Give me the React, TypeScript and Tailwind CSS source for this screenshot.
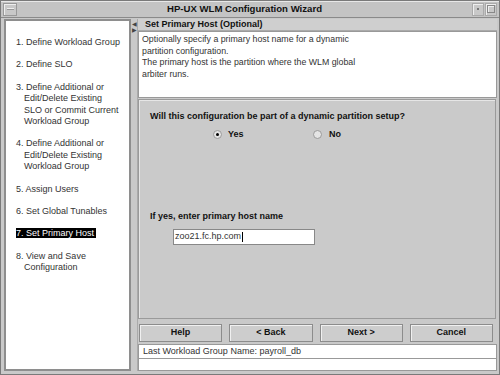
const steps: { lines: string[]; active?: boolean }[] = [
  { lines: ["1. Define Workload Group"] },
  { lines: ["2. Define SLO"] },
  { lines: ["3. Define Additional or", "Edit/Delete Existing", "SLO or Commit Current", "Workload Group"] },
  { lines: ["4. Define Additional or", "Edit/Delete Existing", "Workload Group"] },
  { lines: ["5. Assign Users"] },
  { lines: ["6. Set Global Tunables"] },
  { lines: ["7. Set Primary Host"], active: true },
  { lines: ["8. View and Save", "Configuration"] },
];

function Radio({ checked }: { checked?: boolean }) {
  return (
    <span className="flex h-[9px] w-[9px] items-center justify-center rounded-full border border-[#9a9a9a] bg-[#e4e4e4]">
      {checked && <span className="h-[3px] w-[3px] rounded-full bg-black" />}
    </span>
  );
}

function Button({ label }: { label: string }) {
  return (
    <div className="flex h-[18px] flex-1 items-center justify-center border border-[#8c8c8c] bg-[#cdcdcd] text-[9px] font-bold text-[#111] shadow-[inset_1px_1px_0_#f0f0f0]">
      {label}
    </div>
  );
}

export default function App() {
  return (
    <div
      className="flex h-[375px] w-[500px] flex-col overflow-hidden border border-[#7a7a7a] bg-[#c9c9c9] text-[#222]"
      style={{ fontFamily: '"Liberation Sans", Arial, sans-serif' }}
    >
      {/* title bar */}
      <div className="flex h-[17px] shrink-0 items-center border-b border-[#8a8a8a] bg-[#c4c4c4] px-[2px] shadow-[inset_0_1px_0_#e8e8e8]">
        <div className="flex h-[13px] w-[14px] items-center justify-center border border-[#999] bg-[#c8c8c8] shadow-[inset_1px_1px_0_#eee]">
          <span className="h-[2px] w-[7px] border-t border-[#eee] bg-[#999]" />
        </div>
        <div className="flex-1 pt-[1px] text-center text-[9.6px] font-bold text-[#111]">HP-UX WLM Configuration Wizard</div>
        <div className="flex gap-[1px]">
          <div className="flex h-[13px] w-[12px] items-center justify-center border border-[#aaa] bg-[#c8c8c8] shadow-[inset_1px_1px_0_#eee]">
            <span className="h-[2px] w-[2px] bg-[#777]" />
          </div>
          <div className="flex h-[13px] w-[12px] items-center justify-center border border-[#aaa] bg-[#c8c8c8] shadow-[inset_1px_1px_0_#eee]">
            <span className="h-[8px] w-[8px] border border-[#888] shadow-[inset_1px_1px_0_#eee]" />
          </div>
        </div>
      </div>

      <div className="flex min-h-0 flex-1 pb-[3px] pl-[3px] pr-[2px] pt-[1px]">
        {/* steps list */}
        <div className="w-[127px] shrink-0 border-2 border-[#8e8e8e] bg-white pl-[10px] pt-[16px] text-[9px] leading-[11.4px] text-[#333]">
          {steps.map((s, i) => (
            <div key={i} className="mb-[11px]">
              {s.lines.map((l, j) => (
                <div key={j} className={j > 0 ? "pl-[8px]" : ""}>
                  {s.active ? <span className="bg-black pr-[2px] text-white">{l}</span> : l}
                </div>
              ))}
            </div>
          ))}
        </div>

        {/* splitter */}
        <div className="flex w-[7px] shrink-0 flex-col items-center border-r border-[#aaa] pt-[2px]">
          <span className="text-[6px] leading-[6px] text-[#444]">◀</span>
          <span className="text-[6px] leading-[6px] text-[#444]">▶</span>
        </div>

        {/* right column */}
        <div className="flex min-w-0 flex-1 flex-col">
          <div className="flex h-[12px] shrink-0 items-center border-b border-[#aaa] bg-[#cfcfcf] pl-[7px] pt-[1px] text-[9px] font-bold text-[#111]">
            Set Primary Host (Optional)
          </div>
          <div className="h-[67px] shrink-0 border border-[#999] bg-white pl-[3px] pt-[2px] text-[8.8px] leading-[11.5px] text-[#333]">
            <div>Optionally specify a primary host name for a dynamic</div>
            <div>partition configuration.</div>
            <div>The primary host is the partition where the WLM global</div>
            <div>arbiter runs.</div>
          </div>

          <div className="mr-[1px] mt-[1px] h-[220px] shrink-0 border border-[#9a9a9a] bg-[#cacaca] pl-[11px] pt-[10px] shadow-[inset_1px_1px_0_#e6e6e6] text-[9px] font-bold text-[#111]">
            <div>Will this configuration be part of a dynamic partition setup?</div>
            <div className="mt-[4px] flex items-center">
              <div className="ml-[63px] flex w-[100px] items-center gap-[6px]">
                <Radio checked />
                <span>Yes</span>
              </div>
              <div className="flex items-center gap-[7px]">
                <Radio />
                <span>No</span>
              </div>
            </div>
            <div className="mt-[69px]">If yes, enter primary host name</div>
            <div className="ml-[23px] mt-[5px] flex h-[16px] w-[142px] items-center border border-[#888] bg-white pl-[1px] text-[9px] font-normal text-[#333]">
              zoo21.fc.hp.com
              <span className="ml-[1px] h-[10px] w-[1px] bg-black" />
            </div>
          </div>

          <div className="mt-[5px] flex shrink-0 gap-[7px] pl-[1px] pr-[4px]">
            <Button label="Help" />
            <Button label="< Back" />
            <Button label="Next >" />
            <Button label="Cancel" />
          </div>

          <div className="mt-[2px] flex h-[15px] shrink-0 items-center border border-[#999] bg-white pl-[4px] text-[9px] text-[#333]">
            Last Workload Group Name: payroll_db
          </div>
          <div className="flex-1 border border-t-0 border-[#999] bg-white" />
        </div>
      </div>
    </div>
  );
}
